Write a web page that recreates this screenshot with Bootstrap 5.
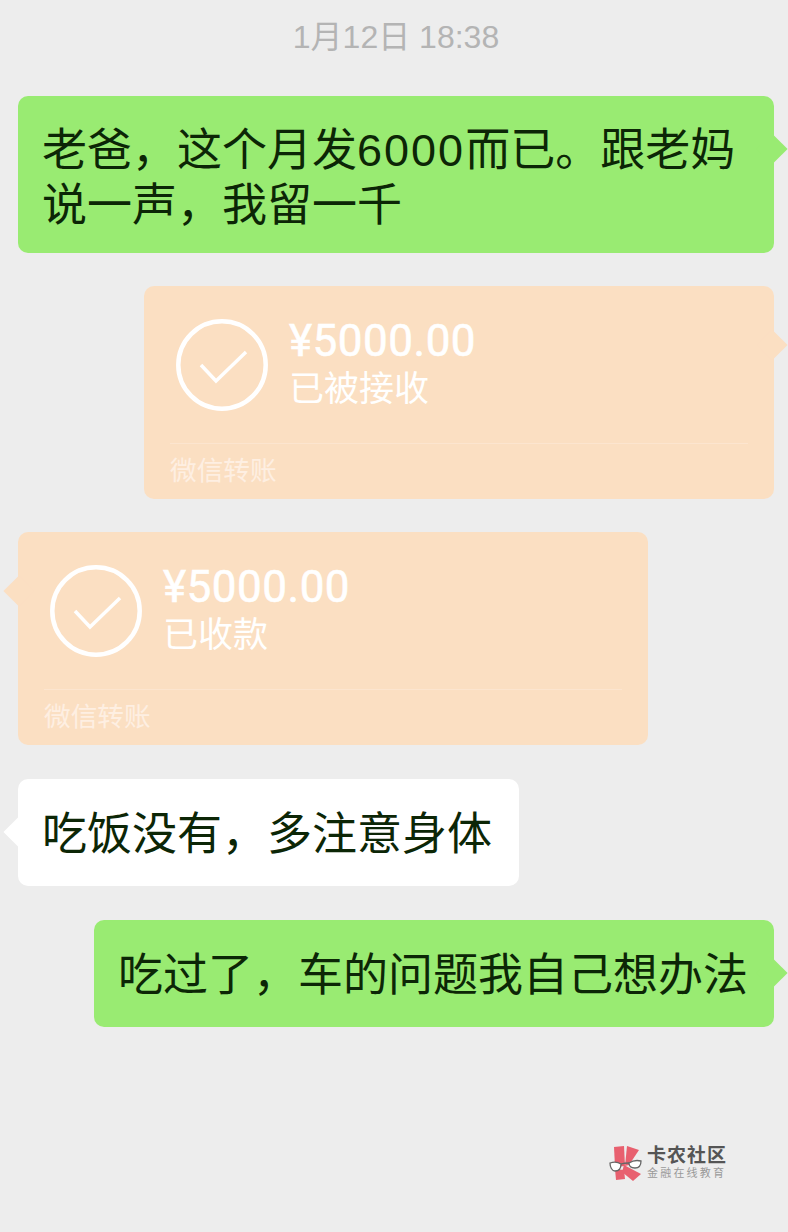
<!DOCTYPE html>
<html lang="zh-CN">
<head>
    <meta charset="UTF-8">
    <meta name="viewport" content="width=device-width, initial-scale=1.0">
    <title>聊天记录</title>
    <link href="https://cdn.jsdelivr.net/npm/bootstrap@5.3.0/dist/css/bootstrap.min.css" rel="stylesheet">
    <style>
        html, body { height: 100%; }
        body { background-color: #ededed; font-family: "Liberation Sans", "Noto Sans CJK SC", sans-serif; overflow: hidden; }
        .chat-page { height: 1232px; padding: 0 14px 0 18px; position: relative; }
        .chat-time { height: 96px; padding-top: 15px; font-size: 32px; line-height: 44px; color: #b4b4b4; text-align: center; }
        .chat-list { gap: 33px; }
        .bubble { position: relative; border-radius: 10px; color: #0c2606; font-size: 45px; line-height: 55px; }
        .bubble-green { background-color: #99eb72; }
        .bubble-white { background-color: #fff; }
        .bubble-pay { background-color: #fbdfc2; color: #fff; width: 630px; height: 213px; }
        .bubble-wide { width: 756px; height: 157px; padding-top: 27px; }
        .bubble-m { width: 680px; height: 107px; margin-top: 1px; padding-top: 28px; }
        .bubble-s { width: 501px; height: 107px; margin-top: 1px; padding-top: 28px; }
        .digits { letter-spacing: 2px; }
        .tail { position: absolute; top: 53px; width: 22px; height: 22px; transform: translateY(-50%) rotate(45deg); background-color: inherit; }
        .bubble-pay .tail { top: 59px; }
        .tail-r { right: -9px; }
        .tail-l { left: -10px; }
        .pay-main { height: 157px; padding: 33px 0 0 32px; gap: 21px; }
        .pay-check { width: 92px; height: 92px; flex: none; }
        .pay-amount { font-family: Roboto, "Noto Sans CJK SC", sans-serif; font-weight: 400; font-size: 44px; line-height: 44px; letter-spacing: 0.5px; -webkit-text-stroke: 0.6px #fff; }
        .pay-status { font-size: 35px; line-height: 48px; margin-top: -1px; font-family: "Noto Sans CJK SC", sans-serif; }
        .pay-foot { border-top: 1px solid #fce5cf; margin: 0 26px; height: 56px; font-size: 26.7px; line-height: 54px; color: #feefe2; }
        .water { position: absolute; left: 609px; top: 1145px; gap: 4px; }
        .water-title { font-size: 19px; line-height: 20px; font-weight: 700; color: #555; letter-spacing: 1px; }
        .water-sub { font-size: 11px; line-height: 14px; color: #9a9a9a; letter-spacing: 2.2px; }
    </style>
</head>
<body>
    <div class="chat-page">
        <div class="chat-time">1月12日 18:38</div>
        <div class="chat-list d-flex flex-column">
            <div class="bubble bubble-green bubble-wide px-4 align-self-end"><span class="tail tail-r"></span>老爸，这个月发<span class="digits">6000</span>而已。跟老妈说一声，我留一千</div>
            <div class="bubble bubble-pay align-self-end">
                <span class="tail tail-r"></span>
                <div class="pay-main d-flex">
                    <svg class="pay-check" viewBox="0 0 92 92" fill="none" stroke="#fff" stroke-width="4.5"><circle cx="46" cy="46" r="43.7"/><path d="M25 46l15 16 30-29" stroke-width="3.5"/></svg>
                    <div>
                        <div class="pay-amount">¥5000.00</div>
                        <div class="pay-status">已被接收</div>
                    </div>
                </div>
                <div class="pay-foot">微信转账</div>
            </div>
            <div class="bubble bubble-pay align-self-start">
                <span class="tail tail-l"></span>
                <div class="pay-main d-flex">
                    <svg class="pay-check" viewBox="0 0 92 92" fill="none" stroke="#fff" stroke-width="4.5"><circle cx="46" cy="46" r="43.7"/><path d="M25 46l15 16 30-29" stroke-width="3.5"/></svg>
                    <div>
                        <div class="pay-amount">¥5000.00</div>
                        <div class="pay-status">已收款</div>
                    </div>
                </div>
                <div class="pay-foot">微信转账</div>
            </div>
            <div class="bubble bubble-white bubble-s px-4 align-self-start"><span class="tail tail-l"></span>吃饭没有，多注意身体</div>
            <div class="bubble bubble-green bubble-m px-4 align-self-end"><span class="tail tail-r"></span>吃过了，车的问题我自己想办法</div>
        </div>
        <div class="water d-flex align-items-center">
            <svg width="34" height="36" viewBox="0 0 34 36">
                <g fill="#e8606f"><path d="M5 2l10-1 1 20-10 1z"/><path d="M18 1l12 4-10 15-4 1z"/><path d="M15 20l17 9-8 7-11-9z"/><path d="M6 24l9 1 1 9-9 1z"/></g>
                <g fill="#fff" stroke="#666" stroke-width="1.3"><path d="M1 18c3-1 8-1 11 1 0 4-2 7-6 7-3 0-5-4-5-8z"/><path d="M20 18c3-2 8-3 12-2 0 4-2 7-6 7-4 0-6-2-6-5z"/><path d="M12 19c3-1 5-1 8-1" fill="none"/></g>
            </svg>
            <div>
                <div class="water-title">卡农社区</div>
                <div class="water-sub">金融在线教育</div>
            </div>
        </div>
    </div>
    <script src="https://cdn.jsdelivr.net/npm/bootstrap@5.3.0/dist/js/bootstrap.bundle.min.js"></script>
</body>
</html>
